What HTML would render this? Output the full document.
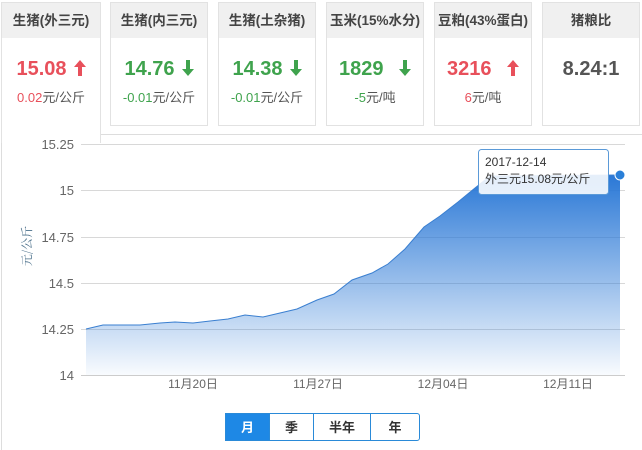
<!DOCTYPE html>
<html><head><meta charset="utf-8"><style>
body{margin:0;width:642px;height:450px;background:#fff;position:relative;overflow:hidden;font-family:"Liberation Sans","Noto Sans CJK SC",sans-serif}
.card{position:absolute;top:2px;width:96px;height:122px;border:1px solid #e2e2e2;background:#fff;text-align:center}
.card .h{height:35px;background:#f0f0f0;line-height:35px;font-size:13.5px;font-weight:bold;color:#444}
.card .v{margin-top:19px;font-size:20px;font-weight:bold;line-height:24px}
.card .s{margin-top:6px;font-size:13px;color:#555}
.r{color:#e8505b}.g{color:#3fa34d}
.arr{display:inline-block;width:12px;height:16px;margin-left:7px;vertical-align:-1px}
.btn{position:absolute;top:413px;height:28px;line-height:28px;text-align:center;font-size:13px;font-weight:bold;color:#333;border:1px solid #2a8ad8;box-sizing:border-box}
</style></head><body>
<div style="position:absolute;left:100px;top:134px;width:542px;border-top:1px solid #ddd"></div>
<div style="position:absolute;left:1px;top:2px;width:0;height:448px;border-left:1px solid #ddd"></div>
<div class="card" style="left:1px;width:98px;height:140px;border-bottom:none"><div class="h">生猪(外三元)</div><div class="v r">15.08<svg class="arr" viewBox="0 0 12 16"><path d="M6 0 L12 7 L8 7 L8 16 L4 16 L4 7 L0 7Z" fill="#e8505b"/></svg></div><div class="s"><span class="r">0.02</span>元/公斤</div></div>
<div class="card" style="left:110px"><div class="h">生猪(内三元)</div><div class="v g">14.76<svg class="arr" viewBox="0 0 12 16"><path d="M6 16 L12 9 L8 9 L8 0 L4 0 L4 9 L0 9Z" fill="#3fa34d"/></svg></div><div class="s"><span class="g">-0.01</span>元/公斤</div></div>
<div class="card" style="left:218px"><div class="h">生猪(土杂猪)</div><div class="v g">14.38<svg class="arr" viewBox="0 0 12 16"><path d="M6 16 L12 9 L8 9 L8 0 L4 0 L4 9 L0 9Z" fill="#3fa34d"/></svg></div><div class="s"><span class="g">-0.01</span>元/公斤</div></div>
<div class="card" style="left:326px"><div class="h">玉米(15%水分)</div><div class="v g">1829 <svg class="arr" style="margin-left:10px" viewBox="0 0 12 16"><path d="M6 16 L12 9 L8 9 L8 0 L4 0 L4 9 L0 9Z" fill="#3fa34d"/></svg></div><div class="s"><span class="g">-5</span>元/吨</div></div>
<div class="card" style="left:434px"><div class="h">豆粕(43%蛋白)</div><div class="v r">3216 <svg class="arr" style="margin-left:10px" viewBox="0 0 12 16"><path d="M6 0 L12 7 L8 7 L8 16 L4 16 L4 7 L0 7Z" fill="#e8505b"/></svg></div><div class="s"><span class="r">6</span>元/吨</div></div>
<div class="card" style="left:542px"><div class="h">猪粮比</div><div class="v" style="color:#555">8.24:1</div></div>
<svg width="642" height="450" style="position:absolute;left:0;top:0">
<defs><linearGradient id="g" x1="0" y1="0" x2="0" y2="1"><stop offset="0" stop-color="#2a78d6"/><stop offset="1" stop-color="#2a78d6" stop-opacity="0.03"/></linearGradient></defs>
<g stroke="#d8d8d8" stroke-width="1">
<line x1="81" y1="144.5" x2="625" y2="144.5"/><line x1="81" y1="190.5" x2="625" y2="190.5"/><line x1="81" y1="237.5" x2="625" y2="237.5"/><line x1="81" y1="283.5" x2="625" y2="283.5"/><line x1="81" y1="329.5" x2="625" y2="329.5"/><line x1="81" y1="375.5" x2="625" y2="375.5" stroke="#ccc"/>
</g>
<path d="M86,329 L103,325 L140,325 L160,323 L175,322 L193,323 L210,321 L228,319 L245,315 L263,317 L280,313 L297,309 L317,300 L334,294 L352,280 L372,273 L388,264 L405,249 L424,227 L440,216 L458,202 L475,188 L490,176 L620,175 L620,375 L86,375Z" fill="url(#g)"/>
<path d="M86,329 L103,325 L140,325 L160,323 L175,322 L193,323 L210,321 L228,319 L245,315 L263,317 L280,313 L297,309 L317,300 L334,294 L352,280 L372,273 L388,264 L405,249 L424,227 L440,216 L458,202 L475,188 L490,176 L620,175" fill="none" stroke="#3a7fd0" stroke-width="1"/>
<circle cx="620" cy="175" r="5" fill="#2a7fd8" stroke="#fff" stroke-width="1"/>
<g font-size="13" fill="#666" text-anchor="end" font-family="Liberation Sans,sans-serif">
<text x="74" y="149">15.25</text><text x="74" y="195">15</text><text x="74" y="242">14.75</text><text x="74" y="288">14.5</text><text x="74" y="334">14.25</text><text x="74" y="380">14</text></g>
<g font-size="12" fill="#666" text-anchor="middle" font-family="Liberation Sans,Noto Sans CJK SC,sans-serif">
<text x="193" y="388">11月20日</text><text x="318" y="388">11月27日</text><text x="443" y="388">12月04日</text><text x="568" y="388">12月11日</text></g>
<text transform="translate(31,246) rotate(-90)" font-size="12" fill="#4a6f8a" text-anchor="middle" font-family="Noto Serif CJK SC,serif">元/公斤</text>
<rect x="478.5" y="149.5" width="130" height="45" rx="3" fill="#fff" fill-opacity="0.88" stroke="#5b9ad8"/>
<g font-size="12" fill="#333" font-family="Liberation Sans,Noto Sans CJK SC,sans-serif"><text x="485" y="166">2017-12-14</text><text x="485" y="183">外三元15.08元/公斤</text></g>
</svg>
<div class="btn" style="left:225px;width:45px;background:#1e88e5;color:#fff">月</div>
<div class="btn" style="left:269px;width:45px">季</div>
<div class="btn" style="left:313px;width:58px">半年</div>
<div class="btn" style="left:370px;width:50px;border-radius:0 3px 3px 0">年</div>
</body></html>
